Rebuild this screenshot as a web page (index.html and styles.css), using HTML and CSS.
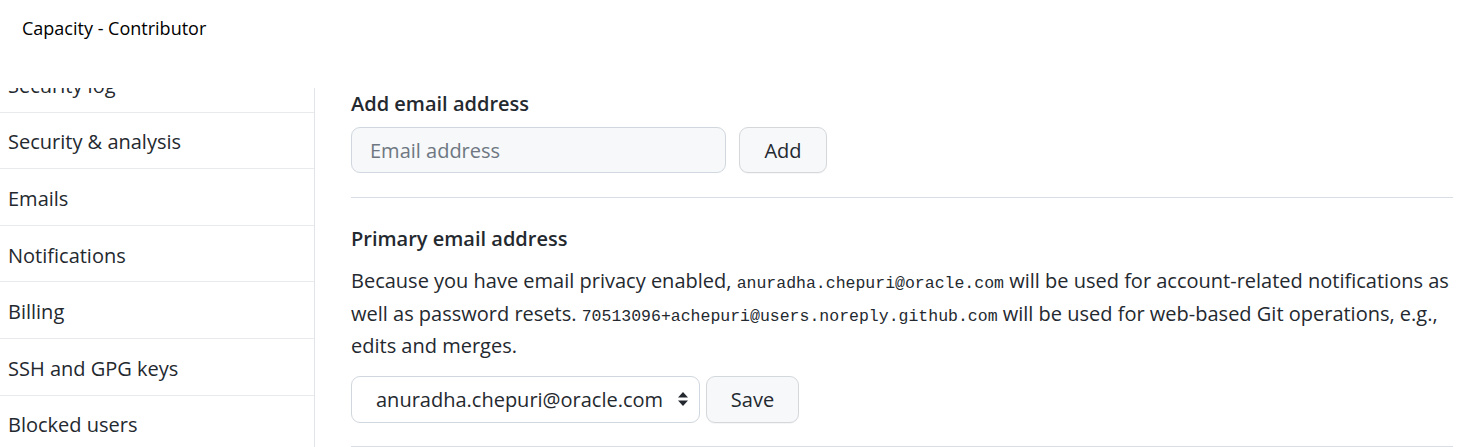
FILE: index.html
```html
<!DOCTYPE html>
<html>
<head>
<meta charset="utf-8">
<link rel="stylesheet" href="styles.css">
</head>
<body>
<header class="titlebar">Capacity - Contributor</header>
<div class="layout">
  <nav class="sidebar">
    <ul class="menu">
      <li class="menu-item">Security log</li>
      <li class="menu-item">Security &amp; analysis</li>
      <li class="menu-item">Emails</li>
      <li class="menu-item">Notifications</li>
      <li class="menu-item">Billing</li>
      <li class="menu-item">SSH and GPG keys</li>
      <li class="menu-item">Blocked users</li>
    </ul>
  </nav>
  <main class="content">
    <section class="block">
      <h3 class="block-title">Add email address</h3>
      <div class="row">
        <input class="field" type="text" placeholder="Email address">
        <button class="btn btn-add">Add</button>
      </div>
    </section>
    <section class="block">
      <h3 class="block-title title-gap">Primary email address</h3>
      <p class="note">Because you have email privacy enabled, <code>anuradha.chepuri@oracle.com</code> will be used for account-related notifications as well as password resets. <code>70513096+achepuri@users.noreply.github.com</code> will be used for web-based Git operations, e.g., edits and merges.</p>
      <div class="row">
        <div class="select">
          <span class="select-value">anuradha.chepuri@oracle.com</span>
          <svg class="select-arrow" width="12" height="16" viewBox="0 0 12 16"><path d="M6 1 L11 6.5 H1 Z M6 15 L11 9.5 H1 Z" fill="#24292f"/></svg>
        </div>
        <button class="btn btn-save">Save</button>
      </div>
    </section>
  </main>
</div>
</body>
</html>
```
FILE: styles.css
```css
* { box-sizing: border-box; }
html, body { margin: 0; padding: 0; background: #fff; }
body {
  font-family: "Open Sans", "Noto Sans", sans-serif;
  color: #24292f;
  width: 1478px;
  height: 447px;
  overflow: hidden;
}
.titlebar {
  height: 88px;
  padding: 16px 0 0 22px;
  font-size: 18px;
  line-height: 24px;
  color: #000;
}
.layout {
  display: flex;
  height: 359px;
}
.sidebar {
  width: 315px;
  flex: none;
  border-right: 1px solid #e1e4e8;
  overflow: hidden;
}
.menu {
  list-style: none;
  margin: -32px 0 0 0;
  padding: 0;
}
.menu-item {
  height: 56.6px;
  border-bottom: 1px solid #e8eaed;
  padding: 0 8px;
  display: flex;
  align-items: center;
  font-size: 20px;
  padding-top: 3px;
}
.content {
  flex: 1;
  padding: 0 25px 0 36px;
}
.block {
  border-bottom: 1px solid #d8dee4;
}
.block:first-child { padding-bottom: 24px; }
.block:last-child { padding-bottom: 23px; }
.block-title {
  margin: 0 0 8px 0;
  font-size: 20px;
  font-weight: 600;
  line-height: 31px;
}
.title-gap { margin-top: 25px; margin-bottom: 11px; }
.row {
  display: flex;
  gap: 13px;
}
.field {
  width: 375px;
  height: 46px;
  border: 1px solid #d0d7de;
  border-radius: 9px;
  background: #f6f8fa;
  padding: 0 18px;
  font-family: inherit;
  font-size: 20px;
  color: #24292f;
  outline: none;
}
.field::placeholder { color: #6e7781; }
.btn {
  height: 46px;
  border: 1px solid #d5d8db;
  border-radius: 9px;
  background: #f6f8fa;
  font-family: inherit;
  font-size: 20px;
  color: #24292f;
  padding: 0;
  box-shadow: 0 1px 0 rgba(27,31,36,0.04);
}
.btn-add { width: 88px; }
.note {
  margin: 0 0 13px 0;
  font-size: 20px;
  line-height: 32.5px;
}
.note code {
  font-family: "Liberation Mono", monospace;
  font-size: 16.5px;
  line-height: 1;
}
.select {
  width: 349px;
  height: 47px;
  border: 1px solid #d0d7de;
  border-radius: 9px;
  display: flex;
  align-items: center;
  justify-content: space-between;
  padding: 0 10px 0 24px;
  font-size: 20px;
}
.select + .btn { margin-left: -7px; }
.btn-save { width: 93px; height: 47px; }
```
